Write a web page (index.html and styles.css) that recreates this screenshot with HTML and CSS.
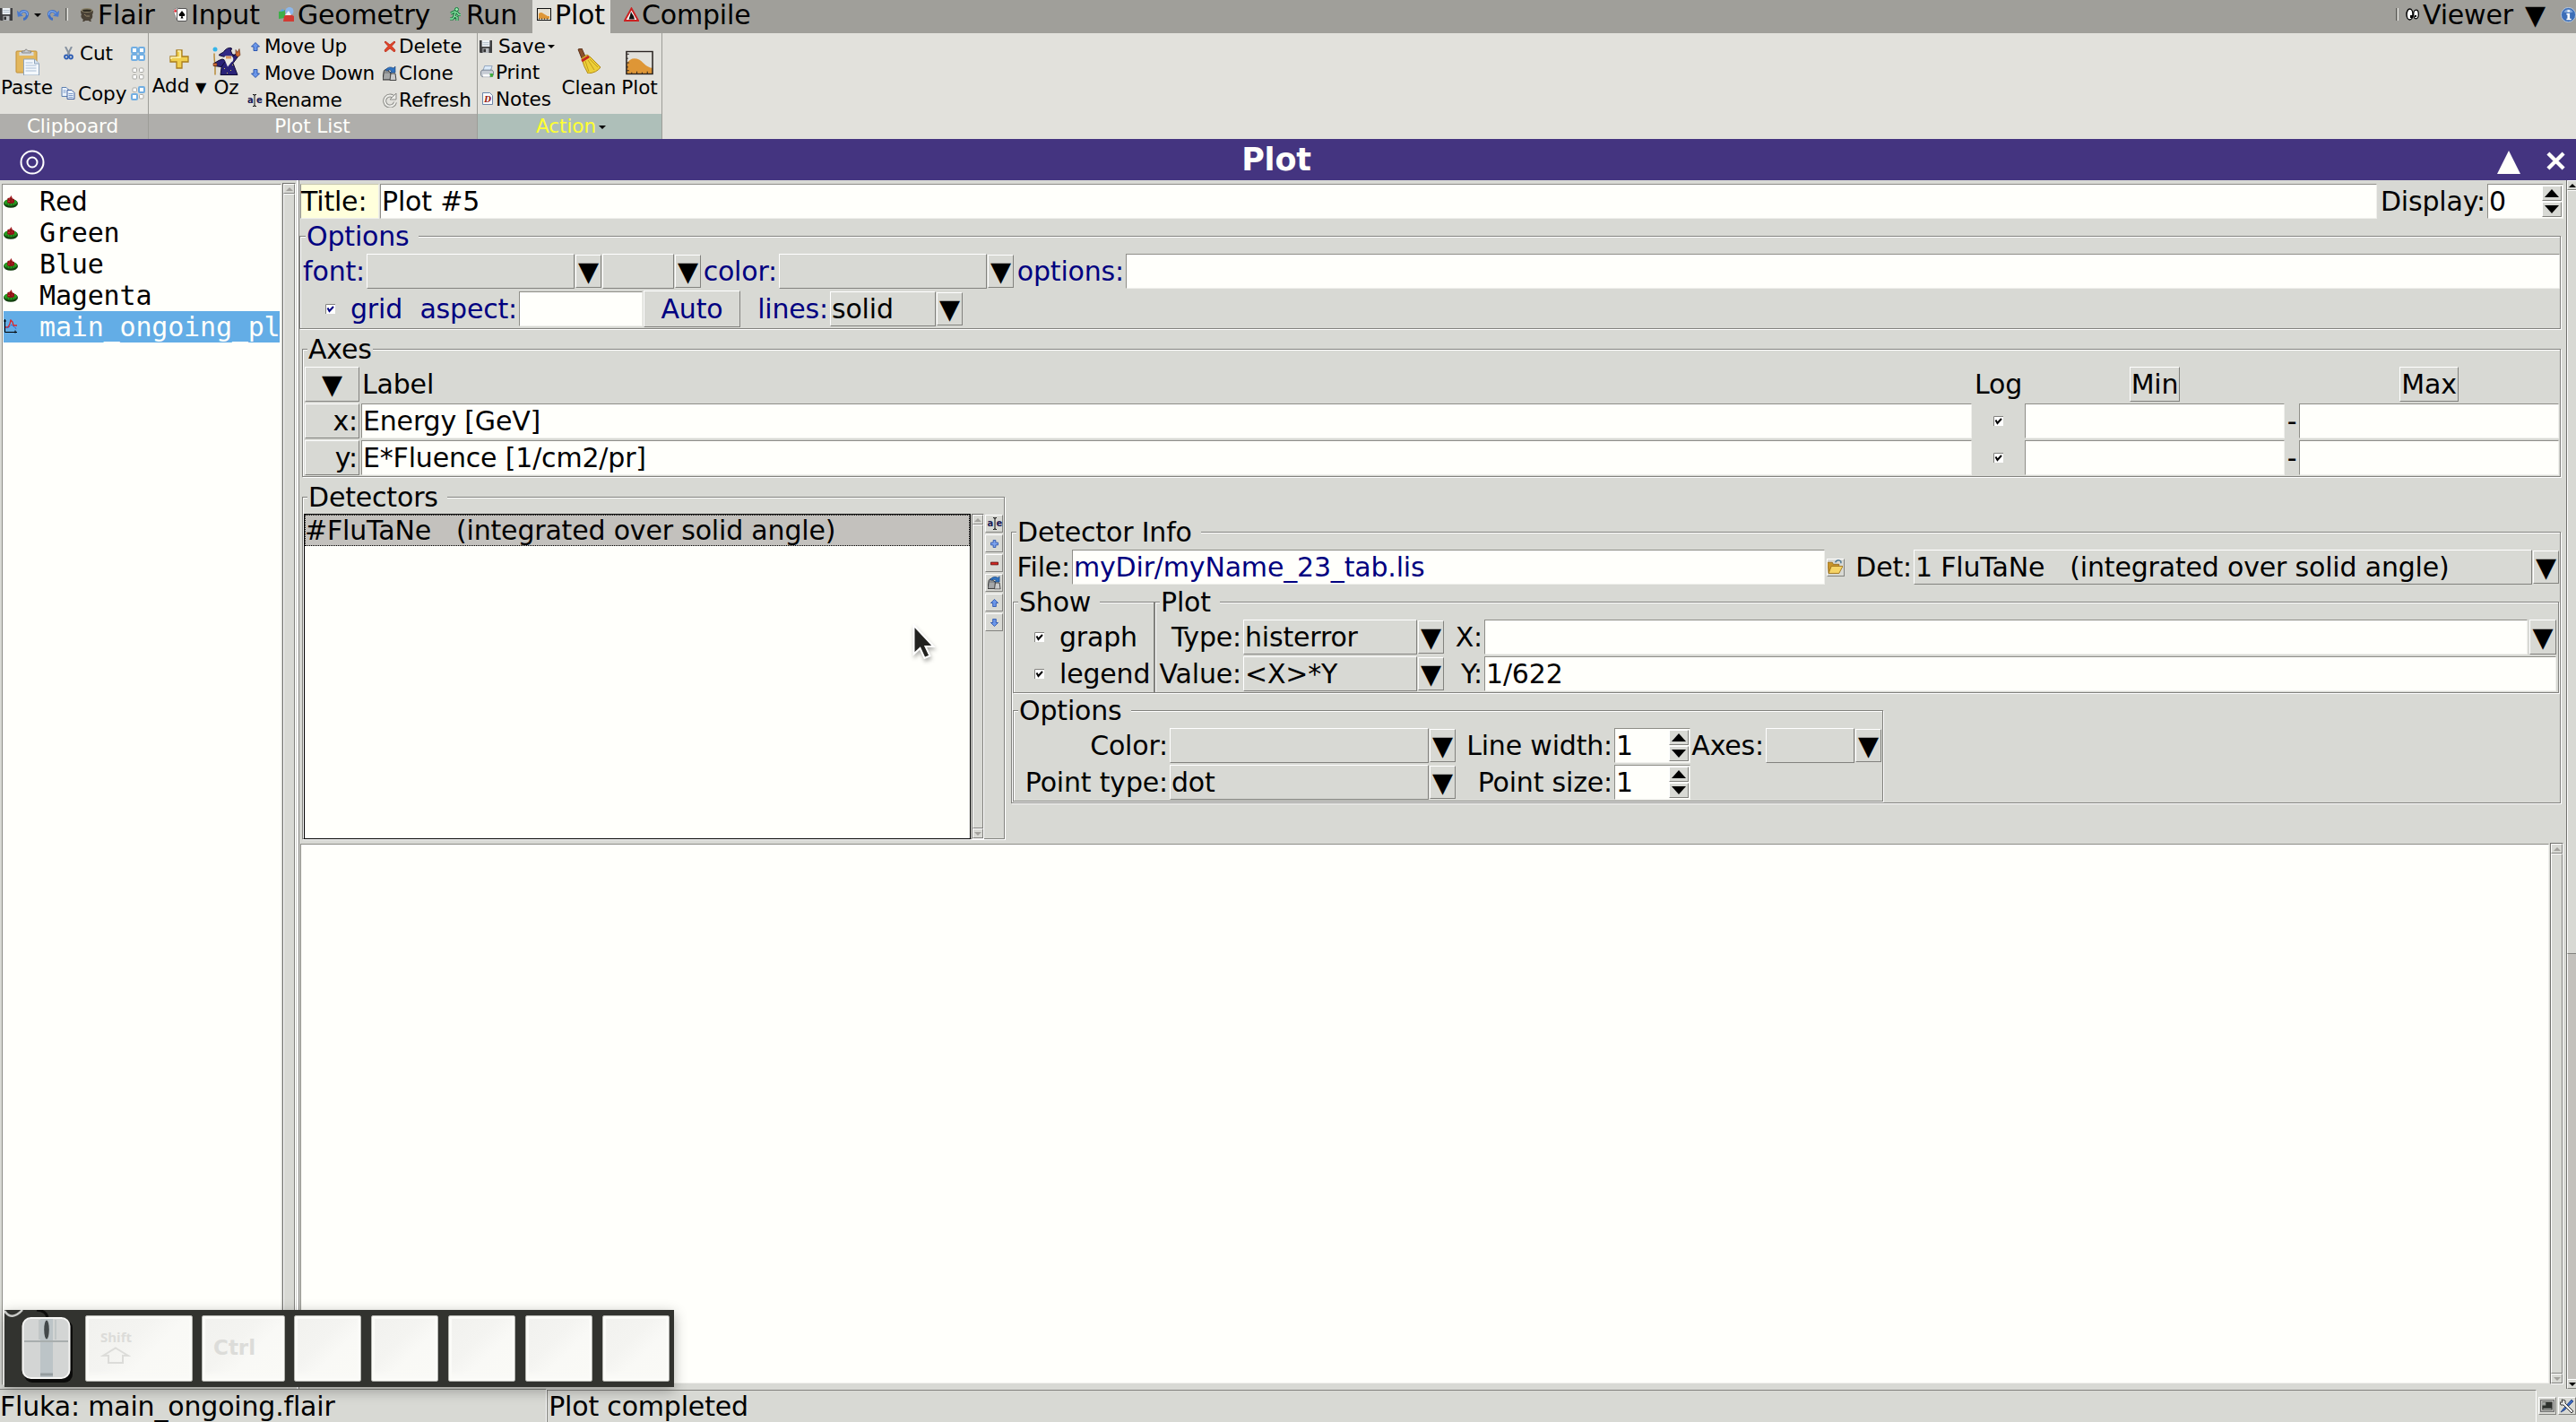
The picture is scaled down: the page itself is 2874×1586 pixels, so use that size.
FILE: index.html
```html
<!DOCTYPE html>
<html lang="en">
<head>
<meta charset="utf-8">
<title>Flair - Plot</title>
<link rel="stylesheet" href="styles.css">
</head>
<body>
<svg class="defs" aria-hidden="true">
  <symbol id="floppy" viewBox="0 0 16 16"><path d="M0 0h16v16H1l-1-1z" fill="#3e3e40"/><rect x="3" y="0" width="10" height="8" fill="#eef2f6"/><path d="M4 3h8M4 5.500h8" stroke="#a9b6c4"/><rect x="4" y="10" width="8" height="6" fill="#b9bcc0"/><rect x="5" y="11" width="3" height="4" fill="#333"/></symbol>
  <symbol id="undo" viewBox="0 0 16 16"><path d="M4 7c3-5 10-3 9 2-.5 3-3 5-5 5" fill="none" stroke="#3f6fc4" stroke-width="3.400"/><path d="M4 7c3-5 10-3 9 2" fill="none" stroke="#7fa9ec" stroke-width="1.400"/><path d="M0 3l1 8 7-1z" fill="#4a7bd0"/></symbol>
  <symbol id="up" viewBox="0 0 10 10"><path d="M5 .5L9.500 5H7V9.500H3V5H.5z" fill="#6b97ea" stroke="#2c56ae"/></symbol>
  <symbol id="down" viewBox="0 0 10 10"><path d="M5 9.500L9.500 5H7V.5H3V5H.5z" fill="#6b97ea" stroke="#2c56ae"/></symbol>
  <symbol id="clone" viewBox="0 0 16 16"><path d="M1 7q0-4 5-4v2l3 2v8H0z" fill="#8a8c8e" stroke="#333"/><path d="M2 8h6v6H1z" fill="#a5a7a8"/><path d="M9 8h5l1 7.500H8z" fill="#c9cacb" stroke="#444"/><path d="M3 4Q7-1 12 2l2-2v7H8l2-2Q7 3 5 5z" fill="#2f72c0" stroke="#163c73" stroke-width=".6"/></symbol>
  <symbol id="plot" viewBox="0 0 32 28"><path d="M1 27V15Q5 9 10 9q6 0 10 5 6 6 11 6v7z" fill="#de9636"/><rect x="1" y="1" width="30" height="26" fill="none" stroke="#2a2422" stroke-width="1.600"/><path d="M1 4h3M1 9h2M1 14h3M1 19h2M1 23h3M7 27v-2M13 27v-3M19 27v-2M25 27v-3" stroke="#2a2422"/></symbol>
  <symbol id="hat" viewBox="0 0 16 14" preserveAspectRatio="none"><ellipse cx="8" cy="9" rx="8" ry="4.800" fill="#123f0e"/><ellipse cx="7.800" cy="7.800" rx="7.200" ry="3.800" fill="#279a20"/><path d="M4 8q4 2 8 0V4l-2-.5L8.500 0 7 2.500 4.500 3z" fill="#8e1416"/><path d="M6 4h1M9 6h1M5 6.500h2M8 2h1" stroke="#d0303a"/><path d="M3 10h10" stroke="#0c5a0a" stroke-dasharray="2 1"/></symbol>
  <symbol id="tick" viewBox="0 0 11 11"><path d="M0 0h11v11H0z" fill="#fff"/><path d="M.5 11V.5H11" fill="none" stroke="#82827e"/><path d="M2.500 4.500L4.500 8 9 3" fill="none" stroke="currentColor" stroke-width="2"/></symbol>
</svg>

<header class="menubar">
  <svg class="ic quick" viewBox="0 0 16 16"><use href="#floppy"/></svg>
  <svg class="ic quick undo" viewBox="0 0 16 16"><use href="#undo"/></svg>
  <i class="caret menu-caret"></i>
  <svg class="ic quick redo" viewBox="0 0 16 16"><use href="#undo" transform="matrix(-1 0 0 1 16 0)"/></svg>
  <i class="sep"></i>
  <a class="tab t-flair"><svg class="ic" viewBox="0 0 16 16"><path d="M1 4h14q0 3-1 4 1 4-2 6l1 2h-2l-1-1H6l-1 1H3l1-2Q0 11 2 8 1 7 1 4z" fill="#4a4236"/><ellipse cx="8" cy="3.500" rx="6.500" ry="2.500" fill="#8b8268"/><ellipse cx="8" cy="3.800" rx="5" ry="1.300" fill="#2d2a20"/><path d="M5 8q2 3 6 2" stroke="#96876a" fill="none"/></svg>Flair</a>
  <a class="tab t-input"><svg class="ic" viewBox="0 0 16 16"><path d="M0 3l7-3 3 10-6 4z" fill="#fff" stroke="#666" stroke-width=".6"/><path d="M1 4l2-2 1 3-2 1z" fill="#e0222d"/><rect x="4.500" y="1.500" width="11" height="14" rx="1.500" fill="#fff" stroke="#333" stroke-width=".8"/><path d="M10 4l3.500 4.500q0 2-3 1.500l1 2.500H8.500l1-2.500q-3 .5-3-1.500z" fill="#000"/></svg>Input</a>
  <a class="tab t-geo"><svg class="ic" viewBox="0 0 17 16"><circle cx="12" cy="4.500" r="4.500" fill="#8db7ea"/><path d="M0 5l7-2v9l-7 1z" fill="#3fae49"/><path d="M1 5l3-3 3 2" fill="#59a5e8"/><path d="M5 16l1-6 5-3 6 3v6z" fill="#d23a32"/><path d="M7 9l4-5 3 5z" fill="#eef1f6"/></svg>Geometry</a>
  <a class="tab t-run"><svg class="ic" viewBox="0 0 14 16"><circle cx="8.500" cy="2.500" r="2" fill="#9aeab2" stroke="#127a38"/><path d="M2 7l4-2 3 1 2 2.500h2M7 6l-1 4 3 1.500V15M6 10l-2 3H1" fill="none" stroke="#127a38" stroke-width="3.200"/><path d="M2 7l4-2 3 1 2 2.500h2M7 6l-1 4 3 1.500V15M6 10l-2 3H1" fill="none" stroke="#8fe2a8" stroke-width="1.300"/></svg>Run</a>
  <a class="tab t-plot active"><svg class="ic" viewBox="0 0 16 14"><rect x=".5" y=".5" width="15" height="13" fill="#e6e0d2" stroke="#111"/><path d="M2 12V6q3-2 5 0l5 3h2v3z" fill="#de9636"/><path d="M2 12h12" stroke="#111" stroke-dasharray="1 2"/></svg>Plot</a>
  <a class="tab t-comp"><svg class="ic" viewBox="0 0 17 16"><path d="M8.500 1.500L16 15H1z" fill="#fff" stroke="#cc2222" stroke-width="2"/><path d="M8 5l1 2 2 3 1 3.500H5.500L7 9z" fill="#111"/></svg>Compile</a>
  <div class="viewer"><i class="sep"></i><svg class="ic eyes" viewBox="0 0 15 14"><ellipse cx="4.500" cy="7" rx="3.500" ry="6" fill="#fff" stroke="#000" stroke-width="1.500"/><ellipse cx="11.500" cy="7" rx="2.800" ry="4.800" fill="#fff" stroke="#000" stroke-width="1.300"/><path d="M5 8h3v3H5zM10 8h2v2h-2z" fill="#000"/></svg><span class="vtext">Viewer</span><span class="vtri">▼</span><svg class="ic info" viewBox="0 0 16 16"><circle cx="8" cy="8" r="7.600" fill="#3c6eb8" stroke="#c9d9ee" stroke-width=".7"/><path d="M3 5q5-6 10 0-5 2-10 0z" fill="#86abdc"/><path d="M7 3h2.500v2H7zM6 6.500h3.500V12H11v1.500H6V12h1V8H6z" fill="#fff"/></svg></div>
</header>

<section class="ribbon">
  <div class="group g-clip">
    <div class="tools">
      <div class="big paste"><svg viewBox="0 0 26 30"><rect x=".5" y="3" width="23" height="24" rx="1" fill="#e3b75c" stroke="#c08f36"/><path d="M4 4h16v4H4z" fill="#d7dadb"/><path d="M7 5V3h3q1-4 4 0h3v2z" fill="#c9ccd0" stroke="#777" stroke-width=".8"/><path d="M9 12h12l5 5v13H9z" fill="#f4f8fc" stroke="#8fa4bb"/><path d="M21 12v5h5" fill="#d5e3f1" stroke="#8fa4bb"/><path d="M11 16h8M11 19h12M11 22h12M11 25h12" stroke="#a9bed5"/></svg><span>Paste</span></div>
      <div class="stack cutcopy"><div><svg class="s cut" viewBox="0 0 11 15"><path d="M2 0l4.500 9M9 0L4.500 9" stroke="#8792a0" stroke-width="2"/><circle cx="3" cy="11.500" r="2" fill="none" stroke="#2f5fb5" stroke-width="1.800"/><circle cx="8" cy="11.500" r="2" fill="none" stroke="#2f5fb5" stroke-width="1.800"/></svg>Cut</div><div><svg class="s cpy" viewBox="0 0 15 14"><path d="M.5.5h5l3 3v7h-8z" fill="#eaf2fb" stroke="#5d7fb0"/><path d="M6.500 3.500h5l3 3v7h-8z" fill="#eaf2fb" stroke="#4060a0"/><path d="M8 7.500h5M8 9.500h5M8 11.500h5M2 4h3M2 6h3" stroke="#7d9bca"/></svg>Copy</div></div>
      <div class="sel">
        <svg viewBox="0 0 16 16" fill="#fff" stroke="#72aee2" stroke-width="2"><rect x="1" y="1" width="6" height="6" rx="1"/><rect x="9" y="1" width="6" height="6" rx="1"/><rect x="1" y="9" width="6" height="6" rx="1"/><rect x="9" y="9" width="6" height="6" rx="1"/></svg>
        <svg viewBox="0 0 16 16" fill="#fff" stroke="#a9a9a5"><rect x="2" y="2" width="4.500" height="4.500" rx="1"/><rect x="9.500" y="2" width="4.500" height="4.500" rx="1"/><rect x="2" y="9.500" width="4.500" height="4.500" rx="1"/><rect x="9.500" y="9.500" width="4.500" height="4.500" rx="1"/></svg>
        <svg viewBox="0 0 16 16" fill="#fff"><rect x="2" y="2" width="4.500" height="4.500" rx="1" stroke="#a9a9a5"/><rect x="9" y="1" width="6" height="6" rx="1" stroke="#72aee2" stroke-width="2"/><rect x="1" y="9" width="6" height="6" rx="1" stroke="#72aee2" stroke-width="2"/><rect x="9.500" y="9.500" width="4.500" height="4.500" rx="1" stroke="#a9a9a5"/></svg>
      </div>
    </div>
    <div class="gname">Clipboard</div>
  </div>
  <div class="group g-list">
    <div class="tools">
      <div class="big add"><svg viewBox="0 0 22 22"><path d="M8 1h6v7h7v6h-7v7H8v-7H1V8h7z" fill="#f0cf4e" stroke="#a87c1c" stroke-width="1.300"/><path d="M9 2h3v7H2v2" fill="none" stroke="#fdf3b4" stroke-width="1.500"/></svg><span>Add <b class="dd">▼</b></span></div>
      <div class="big oz"><svg viewBox="0 0 32 32"><path d="M2 7q0 8 1 12v12" stroke="#b88c3a" stroke-width="1.500" fill="none"/><circle cx="3" cy="2.500" r="2.500" fill="#35b5ea"/><path d="M11 16l-2 15h19l-5-13 6-8-4-2-5 6z" fill="#2a2278" stroke="#100b34"/><path d="M7 15q4-3 8 0l-5 7-8-1v-3z" fill="#2a2278" stroke="#100b34"/><path d="M7 9q2-2 5-3 4-6 9-5 2 2-1 2l2 5 3 1q-8 4-18 0z" fill="#332a86" stroke="#100b34"/><path d="M14 10h8q3 5-1 7l-4 5-3-7q-2-2 0-5z" fill="#eceae6"/><path d="M15 10h6v3h-6z" fill="#d99a62"/><path d="M26 3l2 3 2-4 1 7-3 2-2-2zM1 18h4v3H1z" fill="#cf6c34" stroke="#5b2810" stroke-width=".6"/><path d="M13 24h1M20 26h1M16 29h1M22 20h1" stroke="#d6c84c"/></svg><span>Oz</span></div>
      <div class="stack moves"><div><svg class="m" viewBox="0 0 10 10"><use href="#up"/></svg>Move Up</div><div><svg class="m" viewBox="0 0 10 10"><use href="#down"/></svg>Move Down</div><div><span class="r ren"><em>a</em><svg viewBox="0 0 4 14"><path d="M0 .5h1.500l.5 1 .5-1H4M2 1v12M0 13.500h1.500l.5-1 .5 1H4" fill="none" stroke="#111"/></svg><em>e</em></span>Rename</div></div>
      <div class="stack dels"><div><svg class="x" viewBox="0 0 14 13"><path d="M2 1l5 4 5-4 1 1-4 4.500 4 4.500-1 2-5-4-5 4-1-2 4-4.500-4-4.500z" fill="#e1452a" stroke="#b92a16" stroke-width=".8"/></svg>Delete</div><div><svg class="c" viewBox="0 0 16 16"><use href="#clone"/></svg>Clone</div><div><svg class="c" viewBox="0 0 16 16"><path d="M13 5A6 6 0 1 0 14 10" fill="none" stroke="#8b8b87" stroke-width="4"/><path d="M13 5A6 6 0 1 0 14 10" fill="none" stroke="#eeeeea" stroke-width="2"/><path d="M15 0v7H8z" fill="#eeeeea" stroke="#8b8b87"/></svg>Refresh</div></div>
    </div>
    <div class="gname">Plot List</div>
  </div>
  <div class="group g-act">
    <div class="tools">
      <div class="stack acts"><div><svg class="f" viewBox="0 0 16 16"><use href="#floppy"/></svg><span class="sv">Save</span><i class="caret"></i></div><div><svg class="p" viewBox="0 0 16 14"><path d="M5 0h9l-2 6H3z" fill="#dceaf8" stroke="#7890b0" stroke-width=".8"/><path d="M2 5h12l1.500 2v4L13 13H2L.5 11V7z" fill="#c7ccd4" stroke="#5f6b7c" stroke-width=".8"/><path d="M3 10h8v3H3z" fill="#fff"/><path d="M11 9h4v4h-3z" fill="#3fae3c"/></svg>Print</div><div><svg class="n" viewBox="0 0 12 14"><path d="M.5.5h8l3 3v10H.5z" fill="#f8fafc" stroke="#6c86a8"/><text x="2.200" y="10.500" font-family="DejaVu Serif" font-style="italic" font-weight="bold" font-size="9" fill="#9b1d14">D</text></svg>Notes</div></div>
      <div class="big clean"><svg viewBox="0 0 26 28"><path d="M1 1l4-1 4 9-4 2z" fill="#8a4f2c" stroke="#5b3118"/><path d="M5 11l6-4 4 3 11 11q-4 6-14 7Q7 20 5 11z" fill="#eccf38" stroke="#b38a14"/><path d="M5 14l8-5" stroke="#c4281e" stroke-width="3"/><path d="M9 14l4 12M12 13l7 11M14 12l9 9" stroke="#c49d1c"/></svg><span>Clean</span></div>
      <div class="big bplot"><svg viewBox="0 0 32 28"><use href="#plot"/></svg><span>Plot</span></div>
    </div>
    <div class="gname">Action<i class="caret"></i></div>
  </div>
</section>

<div class="titlebar">
  <svg class="ring" viewBox="0 0 28 28" fill="none" stroke="#fff"><circle cx="14" cy="14" r="12.500" stroke-width="2"/><circle cx="14" cy="14" r="5.500" stroke-width="2"/></svg>
  <h1>Plot</h1>
  <svg class="tup" viewBox="0 0 26 26"><path d="M13 0l13 26H0z" fill="#fffffb"/></svg>
  <svg class="tx" viewBox="0 0 22 22"><path d="M2 2l18 18M20 2L2 20" stroke="#fffffb" stroke-width="4.500"/></svg>
</div>

<main class="work">
  <aside class="side">
    <ul class="plots">
      <li><svg viewBox="0 0 16 14"><use href="#hat"/></svg>Red</li>
      <li><svg viewBox="0 0 16 14"><use href="#hat"/></svg>Green</li>
      <li><svg viewBox="0 0 16 14"><use href="#hat"/></svg>Blue</li>
      <li><svg viewBox="0 0 16 14"><use href="#hat"/></svg>Magenta</li>
      <li class="on"><svg class="curve" viewBox="0 0 16 16"><path d="M1.500 0v14.500H15M0 2h3M13 12.500v3" stroke="#000" fill="none"/><path d="M2 9h3l2-4 1-4 2 2 1 4 4 0" fill="none" stroke="#e02424" stroke-width="1.300"/><path d="M3 10l4-2 2-2 3 3 3 2" fill="none" stroke="#3452c0" stroke-dasharray="2 1"/></svg>main_ongoing_pl</li>
    </ul>
    <div class="sbar"><b class="su"></b><b class="thumb"></b><b class="sd"></b></div>
  </aside>

  <div class="panel">
    <div class="row title-row">
      <span class="tlabel">Title:</span><span class="entry tentry">Plot #5</span><span class="lab dlab">Display:</span><span class="spin"><span>0</span><i class="btns"><b></b><b></b></i></span>
    </div>

    <div class="frame f-opt navy">
      <div class="legend lg-wide">Options</div>
      <div class="row o1"><span class="lab w70">font:</span><span class="combo w232"></span><b class="arr">▼</b><span class="combo w80"></span><b class="arr">▼</b><span class="lab w84">color:</span><span class="combo w232"></span><b class="arr">▼</b><span class="lab w123">options:</span><span class="entry grow"></span></div>
      <div class="row o2"><svg class="tick" viewBox="0 0 11 11"><use href="#tick"/></svg><span class="grid">grid</span><span class="lab w115">aspect:</span><span class="entry w138"></span><span class="auto">Auto</span><span class="lab w98">lines:</span><span class="combo w118">solid</span><b class="arr">▼</b></div>
    </div>

    <div class="frame f-axes">
      <div class="legend">Axes</div>
      <div class="axes">
        <b class="axbtn mid">▼</b><span class="axl">Label</span><span class="ctr">Log</span><span class="ctr"><b class="hbtn">Min</b></span><span></span><span class="ctr"><b class="hbtn">Max</b></span>
        <b class="axbtn">x:</b><span class="entry">Energy [GeV]</span><span class="ctr"><svg class="tick" viewBox="0 0 11 11"><use href="#tick"/></svg></span><span class="entry"></span><span class="ctr">-</span><span class="entry"></span>
        <b class="axbtn">y:</b><span class="entry">E*Fluence [1/cm2/pr]</span><span class="ctr"><svg class="tick" viewBox="0 0 11 11"><use href="#tick"/></svg></span><span class="entry"></span><span class="ctr">-</span><span class="entry"></span>
      </div>
    </div>

    <div class="split">
      <div class="frame f-det">
        <div class="legend lg-wide">Detectors</div>
        <div class="det">
          <div class="dlist"><div class="drow">#FluTaNe&nbsp;&nbsp; (integrated over solid angle)</div></div>
          <div class="sbar"><b class="su"></b><b class="thumb"></b><b class="sd"></b></div>
          <div class="dbtns">
            <b><span class="r ren"><em>a</em><svg viewBox="0 0 4 14"><path d="M0 .5h1.500l.5 1 .5-1H4M2 1v12M0 13.500h1.500l.5-1 .5 1H4" fill="none" stroke="#111"/></svg><em>e</em></span></b>
            <b><svg viewBox="0 0 10 10"><path d="M3.500.5h3v3h3v3h-3v3h-3v-3h-3v-3h3z" fill="#7ca3ee" stroke="#2c56ae"/></svg></b>
            <b><svg viewBox="0 0 10 10"><path d="M.5 3.500h9v3h-9z" fill="#d8261e" stroke="#651010"/></svg></b>
            <b><svg class="r c" viewBox="0 0 16 16"><use href="#clone"/></svg></b>
            <b><svg viewBox="0 0 10 10"><use href="#up"/></svg></b>
            <b><svg viewBox="0 0 10 10"><use href="#down"/></svg></b>
          </div>
        </div>
      </div>

      <div class="frame f-info">
        <div class="legend lg-wide">Detector Info</div>
        <div class="row filerow"><span class="lab w65">File:</span><span class="entry w840 navy">myDir/myName_23_tab.lis</span><b class="fold"><svg viewBox="0 0 16 15"><path d="M0 3h5l1 2h6v9H1z" fill="#c9952a" stroke="#8f6414" stroke-width=".7"/><path d="M4 7h12l-4 7.500H1z" fill="#f6d465" stroke="#9b6f18" stroke-width=".8"/><path d="M8 3q3-4 6-1v2" fill="none" stroke="#4d7793" stroke-width="1.400"/></svg></b><span class="lab w77">Det:</span><span class="combo grow">1 FluTaNe&nbsp;&nbsp; (integrated over solid angle)</span><b class="arr">▼</b></div>
        <div class="pair">
          <div class="frame f-show">
            <div class="legend lg-wide">Show</div>
            <div class="row chk"><svg class="tick" viewBox="0 0 11 11"><use href="#tick"/></svg>graph</div>
            <div class="row chk"><svg class="tick" viewBox="0 0 11 11"><use href="#tick"/></svg>legend</div>
          </div>
          <div class="frame f-plot">
            <div class="legend lg-wide">Plot</div>
            <div class="row"><span class="lab w97">Type:</span><span class="combo w194">histerror</span><b class="arr">▼</b><span class="lab w44">X:</span><span class="entry grow"></span><b class="arr tall">▼</b></div>
            <div class="row"><span class="lab w97">Value:</span><span class="combo w194">&lt;X&gt;*Y</span><b class="arr">▼</b><span class="lab w44">Y:</span><span class="entry grow">1/622</span></div>
          </div>
        </div>
        <div class="frame f-dopt">
          <div class="legend lg-wide">Options</div>
          <div class="row"><span class="lab w173">Color:</span><span class="combo w289"></span><b class="arr">▼</b><span class="lab w176">Line width:</span><span class="spin"><span>1</span><i class="btns"><b></b><b></b></i></span><span class="lab w85">Axes:</span><span class="combo w99"></span><b class="arr">▼</b></div>
          <div class="row"><span class="lab w173">Point type:</span><span class="combo w289">dot</span><b class="arr">▼</b><span class="lab w176">Point size:</span><span class="spin"><span>1</span><i class="btns"><b></b><b></b></i></span></div>
        </div>
      </div>
    </div>

    <div class="notes"><div class="entry area"></div><div class="sbar"><b class="su"></b><b class="thumb"></b><b class="sd"></b></div></div>
  </div>
  <div class="outer"><b class="ou"></b><b class="othumb"></b><b class="od"></b></div>
</main>

<footer class="status">
  <span class="st1">Fluka: main_ongoing.flair</span><span class="st2">Plot completed</span>
  <b class="sbtn"><svg viewBox="0 0 14 12"><rect x=".5" y=".5" width="13" height="11" fill="#d0d0cc" stroke="#666"/><rect x="2" y="2" width="10" height="8" fill="#2d302d"/><path d="M2 3h3v2H2zM3 9h8" stroke="#9a9d9a" fill="#aaa"/></svg></b>
  <b class="sbtn"><svg viewBox="0 0 16 16"><path d="M13 1l-9 10-3 4 4-2L15 3z" fill="#3b69c0" stroke="#15306e" stroke-width=".7"/><path d="M2 1l4 1v3l9 9-2 2-9-9-3 0-1-3 3 0z" fill="#ececec" stroke="#222" stroke-width=".9"/></svg></b>
</footer>

<div class="keys">
  <svg class="mouse" viewBox="0 0 79 86"><path d="M0 1q8 12 20 -1" fill="none" stroke="#c9cac7" stroke-width="2.500"/><path d="M36 0q11 1 12 9" fill="none" stroke="#0c0c0b" stroke-width="3"/><rect x="22" y="11" width="54" height="70" rx="9" fill="#0b0b0a"/><rect x="20.500" y="9" width="52" height="67" rx="9" fill="#d3d5d4" stroke="#f6f6f4" stroke-width="2"/><path d="M40 10h14v65H40z" fill="#bcc4c7"/><path d="M22 35h49" stroke="#a8aeae" stroke-width="2"/><path d="M39 11v22M57 11v22" stroke="#aeb6b7"/><ellipse cx="47" cy="22" rx="2.800" ry="10.500" fill="#42484a"/><path d="M40 72h14" stroke="#959d9f" stroke-width="3"/></svg>
  <div class="key shift"><span>Shift</span><svg viewBox="0 0 34 19"><path d="M17 1.500L31 10h-6v8H9v-8H3z" fill="none" stroke="#dcdcd9" stroke-width="2"/></svg></div>
  <div class="key ctrl">Ctrl</div>
  <div class="key"></div><div class="key"></div><div class="key"></div><div class="key"></div><div class="key"></div>
</div>
<svg class="pointer" viewBox="0 0 26 40"><path d="M1.500 1.500v32l7-6.500 5 11 6-2.500-5-10.500h9z" fill="#222220" stroke="#fff" stroke-width="2"/></svg>
</body>
</html>
```
FILE: styles.css
```css
*{box-sizing:border-box}
html,body{margin:0;height:1586px;overflow:hidden}
body{width:2874px;background:#d8d9d4;color:#000;font:30px/35px "DejaVu Sans",sans-serif;letter-spacing:-.18px;white-space:nowrap;display:flex;flex-direction:column}
b{font-weight:normal;display:block}
i{font-style:normal;display:block}
svg{display:block;flex:none}
.defs{position:absolute;width:0;height:0}

/* menu bar */
.menubar{height:37px;flex:none;background:#a09f9a;display:flex;align-items:flex-start}
.quick{width:14px;height:14px;margin-top:9px}
.undo{margin-left:5px}
.redo{margin-left:6px}
.caret{width:0;height:0;border:4px solid transparent;border-top:4px solid #000;border-bottom:0}
.menu-caret{margin:15px 0 0 5px}
.sep{width:3px;height:14px;margin:9px 0 0 7px;border-left:1px solid #5f5f5b;border-right:1px solid #e8e8e4}
.tab{display:flex;height:37px;line-height:33px}
.tab .ic{width:16px;height:16px;margin:8px 4px 0 0}
.t-flair{margin-left:13px;width:104px}
.t-input{width:118px}
.t-geo{width:190px}
.t-geo .ic{width:17px}
.t-run{width:93px}
.t-run .ic{width:14px;margin-right:5px}
.t-plot{width:87px;padding-left:5px}
.t-plot .ic{height:14px;margin:9px 4px 0 0}
.t-comp{margin-left:15px}
.t-comp .ic{width:17px;margin-right:3px}
.active{background:#e2e1dc}
.viewer{margin-left:auto;display:flex;line-height:33px}
.eyes{width:15px;height:14px;margin:9px 0 0 8px}
.vtext{margin-left:4px;width:114px}
.vtri{width:40px}
.info{width:17px;height:17px;margin-top:8px}

/* ribbon */
.ribbon{height:118px;flex:none;background:#e2e1dc;display:flex;font-size:21.600px;line-height:25px;letter-spacing:-.1px}
.group{display:flex;flex-direction:column;border-right:1px solid #9d9d98}
.tools{height:90px;display:flex}
.gname{height:28px;background:#afaeab;color:#fffffb;text-align:center;line-height:27px}
.g-clip{width:166px}
.g-clip .gname{padding-right:3px}
.g-list{width:367px}
.g-list .gname{padding-right:1px}
.g-act{width:206px}
.g-act .gname{background:#aebfb9;color:#ffff32;display:flex;justify-content:center;padding-left:3px}
.gname .caret{margin:13px 0 0 3px}
.big{display:flex;flex-direction:column;align-items:center;justify-content:flex-end;padding-bottom:17px}
.paste{width:60px}.paste svg{width:27px;height:30px;margin-bottom:1px}
.cutcopy{width:84px}
.stack{display:flex;flex-direction:column}
.stack>div{height:30px;display:flex;align-items:center;padding-bottom:1px}
.cutcopy>div{height:45px}
.cut{width:11px;height:15px;margin:0 7px 0 11px}
.cpy{width:16px;height:14px;margin:0 3px 0 8px}
.sel{width:20px;padding-top:15px}
.sel svg{width:16px;height:16px;margin:0 0 6px 2px}
.add{width:66px;padding-left:2px}.add svg{width:22px;height:22px;margin:0 0 6px 0}
.dd{display:inline;font-size:16px}
.oz{width:43px;padding-right:2px}.oz svg{width:32px;height:33px;margin-left:0}
.moves{width:151px;letter-spacing:-.35px}
.m{width:10px;height:10px;margin:0 5px 0 5px}
.r{width:16px;height:14px;margin:0 3px 0 1px}
.ren{display:flex;align-items:center;justify-content:space-between;font-size:10px;line-height:14px;letter-spacing:0;font-weight:bold;color:#1b1a55}
.ren em{font-style:normal;width:6px}
.ren svg{width:4px;height:14px}
.x{width:14px;height:13px;margin:0 3px 0 2px}
.c{width:16px;height:16px;margin:0 2px 0 1px}
.f{width:14px;height:14px;margin:0 7px 0 2px}
.acts>div .caret{margin-left:2px}
.acts{width:93px}
.acts>div:nth-child(2){height:27px}
.acts>div:nth-child(3){height:33px}
.p{width:15px;height:14px;margin:0 2px 0 3px}
.n{width:12px;height:14px;margin:0 3px 0 5px}
.clean{width:62px}.clean svg{width:26px;height:28px;margin:0 0 3px 0}
.bplot{width:50px;padding-left:1px}.bplot svg{width:31px;height:28px;margin:0 0 1px 0}

/* window title */
.titlebar{height:46px;flex:none;background:#443480;color:#fffffb;display:flex;align-items:flex-start}
.titlebar h1{margin:0;width:2736px;text-align:center;font-size:35px;line-height:42px;padding:2px 0 0 12px}
.ring{width:28px;height:28px;margin:12px 0 0 22px}
.tup{width:26px;height:26px;margin-top:13px}
.tx{width:21px;height:21px;margin:14px 0 0 29px}

.work{height:1348px;flex:none;display:grid;grid-template-columns:333px 2530px 11px}

/* sidebar */
.side{display:flex;padding:3px 0 4px 2px;border-right:2px solid #fff;box-shadow:inset -1px 0 #d8d9d4}
.plots{list-style:none;margin:1px 1px 0 0;padding:1px;width:312px;background:#fffffb;border:1px solid;border-color:#8e8e88 #f4f4f0 #f4f4f0 #8e8e88;font-family:"DejaVu Sans Mono",monospace}
.plots li{height:35px;display:flex;letter-spacing:-.16px}
.plots svg{width:16px;height:14px;margin:11px 24px 0 0}
.plots .curve{height:16px;margin-top:9px}
.plots .on{background:#63ade6;color:#fffffb}
.sbar{width:15px;border:1px solid;border-color:#71716d #fff #fff #71716d;display:flex;flex-direction:column}
.sbar b{border:1px solid;border-color:#fff #82827e #82827e #fff}
.su,.sd{height:11px;flex:none}
.su::before,.sd::before{content:"";display:block;width:0;margin:3px auto 0;border:4px solid transparent;border-top:0;border-bottom:4px solid #a3a29d}
.sd::before{border-bottom:0;border-top:4px solid #a3a29d}
.thumb{flex:1}

/* right panel */
.panel{border-left:1px solid #82827e;padding-top:4px;display:flex;flex-direction:column}
.row{display:flex;height:39px;align-items:center;flex:none}
.entry{height:39px;background:#fffffb;border:1px solid;border-color:#8e8e88 #f0f0ec #f0f0ec #8e8e88;padding:1px 1px;display:block}
.combo{height:39px;border:1px solid;border-color:#fff #82827e #82827e #fff;padding:1px 1px;color:#000}
.arr{width:29px;height:37px;border:1px solid;border-color:#fff #82827e #82827e #fff;color:#000;margin-left:1px;flex:none;display:flex;justify-content:center}
.arr.tall{height:39px;margin-left:2px;width:30px;line-height:37px}
.lab{text-align:right;padding-right:2px;flex:none}
.grow{flex:1}
.navy{color:#000080}
.tlabel{width:88px;height:39px;margin:0 1px;background:#ffffdc;border:1px solid;border-color:#c6c6ae #f0f0ec #f0f0ec #8e8e88;padding:1px 0}
.tentry{width:2228px}
.dlab{width:123px;padding-right:2px}
.spin{width:85px;height:39px;background:#fffffb;border:1px solid;border-color:#8e8e88 #f0f0ec #f0f0ec #8e8e88;display:flex;justify-content:space-between;padding:1px 1px}
.btns{width:22px}
.btns b{height:17px;margin-bottom:1px;background:#d8d9d4;border:1px solid;border-color:#fff #82827e #82827e #fff}
.btns b::before{content:"";display:block;width:0;margin:3px 0 0 2px;border:8px solid transparent;border-top:0;border-bottom:9px solid #000}
.btns b+b::before{border-bottom:0;border-top:9px solid #000}
.frame{border:1px solid #82827e;box-shadow:inset 1px 1px #fff,1px 1px #fff}
.legend{width:max-content;background:#d8d9d4;margin:-18px 0 0 5px;padding:0 1px 0 1px;line-height:35px;height:35px;flex:none}
.lg-wide{padding-right:10px}
.f-opt{margin:19px 6px 0 0;height:104px}
.f-opt .legend{margin-left:6px}
.o1{margin-top:2px}
.w70{width:74px}
.w232{width:232px}.w80{width:80px}.w84{width:87px}.w123{width:125px}
.arr+.combo{margin-left:1px}
.o2{margin-top:3px}
.tick{width:11px;height:11px}
.o2 .tick{margin-left:28px}
.grid{margin-left:17px;width:60px}
.w115{width:128px}.w138{width:138px}.w98{width:100px}.w118{width:118px}
.auto{width:108px;height:41px;margin-left:1px;border:1px solid;border-color:#fff #82827e #82827e #fff;text-align:center;line-height:39px}
.f-axes{margin:22px 6px 0 3px;height:143px}
.axes{display:grid;grid-template-columns:62px 1797px 57px 290px 14px 290px;grid-auto-rows:39px;row-gap:2px;column-gap:1px;padding:2px 0 0 2px}
.axbtn{width:61px;border:1px solid;border-color:#fff #82827e #82827e #fff;text-align:right;padding:1px 1px}
.mid{text-align:center}
.axl{padding:2px 1px 0}
.ctr{display:flex;justify-content:center;align-items:center}
.hbtn{border:1px solid;border-color:#fff #82827e #82827e #fff;height:39px;padding:1px}
.split{display:flex;margin:22px 6px 0 3px;height:387px}
.f-det{width:784px;height:382px}
.det{display:flex;height:363px;margin-top:1px;padding-left:1px}
.dlist{width:744px;border:1px solid #000;background:#fffffb}
.drow{background:#c3c1bd;height:35px;outline:1px dotted #000;outline-offset:-1px}
.det .sbar{width:14px;margin-left:1px}
.dbtns{padding:1px 0 0 1px}
.dbtns b{width:20px;height:20px;margin-bottom:2px;border:1px solid;border-color:#fff #82827e #82827e #fff;display:flex;align-items:center;justify-content:center}
.dbtns svg{width:9px;height:9px}
.dbtns .r{width:15px;height:14px;margin:0}
.dbtns .ren svg{width:4px;height:14px}
.dbtns .c{height:16px}
.f-info{margin:39px 0 0 7px;flex:1;height:303px}
.filerow{margin-top:2px;padding-right:1px}
.w65{width:67px}.w840{width:840px}.w77{width:77px}
.fold{width:20px;height:20px;margin-left:2px;border:1px solid;border-color:#fff #82827e #82827e #fff}
.fold svg{width:17px;height:16px}
.pair{display:flex;margin:19px 1px 0 1px}
.frame .frame .row{margin-bottom:2px}
.f-show{width:158px;height:102px}
.f-plot{flex:1;height:102px}
.frame .frame .legend+.row{margin-top:2px}
.chk .tick{margin:0 17px 0 23px}
.w97{width:98px}.w194{width:194px}.w44{width:45px}
.f-plot .row{padding-right:2px}
.f-dopt{width:971px;height:102px;margin:19px 0 0 1px}
.w173{width:174px}.w289{width:289px}.w176{width:177px}.w85{width:84px}.w99{width:99px}
.notes{display:flex;height:603px;margin-left:1px}
.notes .area{width:2509px;height:602px}
.notes .sbar{width:15px;margin:-1px 0 0 1px;height:604px}
.outer{border-left:1px solid #71716d;background:#c3c1bd;display:flex;flex-direction:column;box-shadow:inset 1px 0 #fff}
.outer b{width:14px;background:#d8d9d4;border:1px solid;border-color:#fff #82827e #82827e #fff;flex:none}
.ou,.od{height:11px}
.ou::before,.od::before{content:"";display:block;width:0;margin:3px 0 0 1px;border:4px solid transparent;border-top:0;border-bottom:4px solid #000}
.od{margin-top:auto}
.od::before{border-bottom:0;border-top:4px solid #000}
.othumb{height:852px}

/* status bar */
.status{height:37px;flex:none;display:flex}
.st1{width:611px;border-top:1px solid #82827e;border-right:1px solid #fff;padding-top:1px}
.st2{width:2223px;border-top:1px solid #82827e;border-left:1px solid #82827e;border-right:1px solid #fff;padding:0 0 0 1px;margin-top:1px}
.sbtn{width:20px;height:20px;margin:9px 0 0 2px;border:1px solid;border-color:#fff #82827e #82827e #fff;flex:none}
.sbtn svg{width:16px;height:16px;margin:1px}

/* keystroke overlay floating over the window */
.keys{position:absolute;left:5px;top:1461px;width:747px;height:86px;background:#32332f;display:flex;gap:11px;padding:6px 0;box-shadow:0 4px 14px rgba(0,0,0,.3);letter-spacing:0}
.mouse{width:79px;height:86px;margin-top:-6px}
.key{flex:none;width:75px;height:74px;border:1px solid #b4b5b0;background:linear-gradient(135deg,#f1f1ee 0,#f4f4f1 40%,#f9f9f6 60%,#fafaf6);box-shadow:inset 0 0 0 3px #fbfbf8,inset 0 -8px 5px #fafaf7;border-radius:2px;color:#dcdcd9;font-weight:bold}
.shift{width:120px;padding:13px 0 0 16px;font-size:15px;line-height:20px;font-family:"Open Sans","DejaVu Sans",sans-serif}
.shift svg{width:34px;height:19px;margin-top:1px}
.ctrl{width:93px;font-size:23px;line-height:70px;padding-left:12px;margin:0 -1px}
.pointer{position:absolute;left:1018px;top:696px;width:26px;height:40px;filter:drop-shadow(1px 3px 2px rgba(0,0,0,.3))}
```
